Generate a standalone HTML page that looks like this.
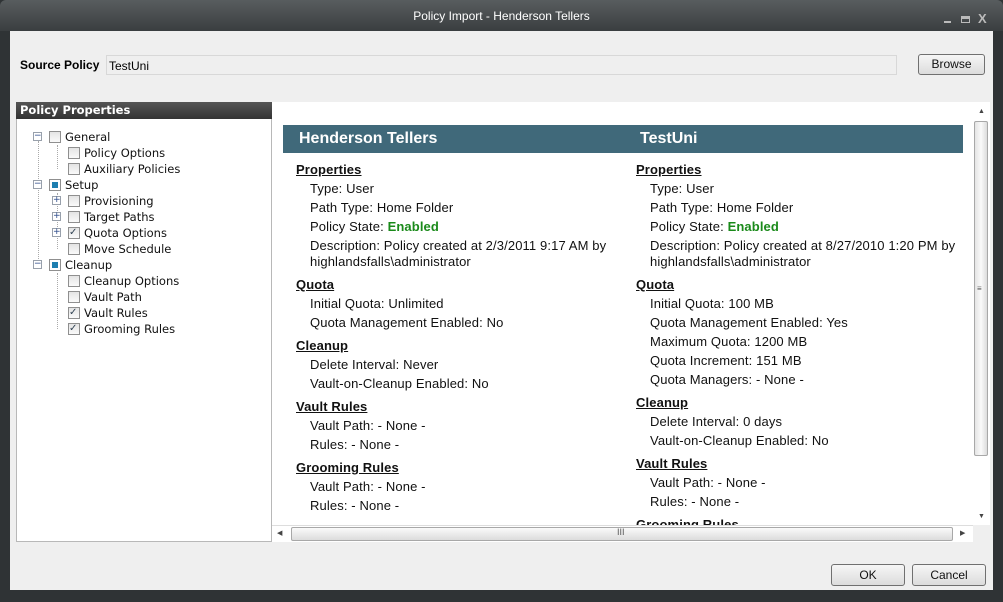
<!DOCTYPE html><html><head><style>
*{margin:0;padding:0;box-sizing:border-box}
body{width:1003px;height:602px;background:#2f3335;font-family:"Liberation Sans",Arial,sans-serif;position:relative;overflow:hidden}
.a{position:absolute}
.t{position:absolute;font-size:13px;line-height:16px;color:#111;white-space:nowrap;transform:translateY(1px);letter-spacing:0.12px}
.h{font-weight:bold;text-decoration:underline}
.g{color:#1a8a1a;font-weight:bold}
.tr{position:absolute;font-size:11.5px;line-height:14px;font-family:"DejaVu Sans",sans-serif;color:#111}
.cb{position:absolute;width:12px;height:12px;border:1px solid #8f8f8f;background:linear-gradient(#e4e4e4,#fafafa)}
.ex{position:absolute;width:9px;height:9px;border:1px solid #98a0ab;background:#fff;font-size:9px;line-height:7px;text-align:center;color:#2b4a8a;font-family:"DejaVu Sans"}
.btn{position:absolute;border:1px solid #707070;border-radius:3px;background:linear-gradient(#f6f6f6,#dcdcdc);font-size:12px;text-align:center;color:#111}
</style></head><body>
<div class="a" style="left:0;top:0;width:1003px;height:31px;background:linear-gradient(#585d5f,#3a3e40);border-radius:6px 6px 0 0"></div>
<div class="a" style="left:0;top:9px;width:1003px;text-align:center;color:#fff;font-size:12px">Policy Import - Henderson Tellers</div>
<div class="a" style="left:944px;top:21px;width:7px;height:2px;background:#bbb"></div>
<div class="a" style="left:961px;top:16px;width:9px;height:7px;border:1px solid #bbb;border-top-width:3px"></div>
<div class="a" style="left:978px;top:11px;color:#bbb;font-size:13px;font-weight:bold">X</div>
<div class="a" style="left:10px;top:31px;width:983px;height:559px;background:#efefef"></div>
<div class="a" style="left:20px;top:58px;font-size:12px;font-weight:bold">Source Policy</div>
<div class="a" style="left:106px;top:55px;width:791px;height:20px;border:1px solid #d8d8d8;background:#efefef;font-size:12px;padding:3px 2px">TestUni</div>
<div class="btn" style="left:918px;top:54px;width:67px;height:21px;line-height:19px">Browse</div>
<!-- left panel -->
<div class="a" style="left:16px;top:102px;width:256px;height:440px;border:1px solid #b8b8b8;background:#fff"></div>
<div class="a" style="left:16px;top:102px;width:256px;height:17px;background:linear-gradient(#555,#333);color:#fff;font-size:11.5px;font-weight:bold;padding:1px 4px;font-family:'DejaVu Sans',sans-serif">Policy Properties</div>
<div class="a" style="left:38px;top:141px;height:128px;border-left:1px dotted #aaa"></div>
<div class="a" style="left:57px;top:145px;height:24px;border-left:1px dotted #aaa"></div>
<div class="a" style="left:57px;top:193px;height:56px;border-left:1px dotted #aaa"></div>
<div class="a" style="left:57px;top:273px;height:56px;border-left:1px dotted #aaa"></div>
<div class="ex" style="left:33px;top:132px">−</div><div class="cb" style="left:49px;top:131px"></div><div class="tr" style="left:65px;top:130px">General</div>
<div class="cb" style="left:68px;top:147px"></div><div class="tr" style="left:84px;top:146px">Policy Options</div>
<div class="cb" style="left:68px;top:163px"></div><div class="tr" style="left:84px;top:162px">Auxiliary Policies</div>
<div class="ex" style="left:33px;top:180px">−</div><div class="cb" style="left:49px;top:179px;background:#fff"><div class="a" style="left:2px;top:2px;width:6px;height:6px;background:#1f7fb0"></div></div><div class="tr" style="left:65px;top:178px">Setup</div>
<div class="ex" style="left:52px;top:196px">+</div><div class="cb" style="left:68px;top:195px"></div><div class="tr" style="left:84px;top:194px">Provisioning</div>
<div class="ex" style="left:52px;top:212px">+</div><div class="cb" style="left:68px;top:211px"></div><div class="tr" style="left:84px;top:210px">Target Paths</div>
<div class="ex" style="left:52px;top:228px">+</div><div class="cb" style="left:68px;top:227px;font-size:10px;line-height:10px;color:#345">✓</div><div class="tr" style="left:84px;top:226px">Quota Options</div>
<div class="cb" style="left:68px;top:243px"></div><div class="tr" style="left:84px;top:242px">Move Schedule</div>
<div class="ex" style="left:33px;top:260px">−</div><div class="cb" style="left:49px;top:259px;background:#fff"><div class="a" style="left:2px;top:2px;width:6px;height:6px;background:#1f7fb0"></div></div><div class="tr" style="left:65px;top:258px">Cleanup</div>
<div class="cb" style="left:68px;top:275px"></div><div class="tr" style="left:84px;top:274px">Cleanup Options</div>
<div class="cb" style="left:68px;top:291px"></div><div class="tr" style="left:84px;top:290px">Vault Path</div>
<div class="cb" style="left:68px;top:307px;font-size:10px;line-height:10px;color:#345">✓</div><div class="tr" style="left:84px;top:306px">Vault Rules</div>
<div class="cb" style="left:68px;top:323px;font-size:10px;line-height:10px;color:#345">✓</div><div class="tr" style="left:84px;top:322px">Grooming Rules</div>
<!-- right content -->
<div class="a" style="left:272px;top:102px;width:701px;height:423px;background:#fff;overflow:hidden">
<div class="a" style="left:11px;top:23px;width:680px;height:28px;background:#40697a"></div>
<div class="a" style="left:27px;top:28px;color:#fff;font-weight:bold;font-size:16px">Henderson Tellers</div>
<div class="a" style="left:368px;top:28px;color:#fff;font-weight:bold;font-size:16px">TestUni</div>
<div class="t h" style="left:24px;top:59px">Properties</div>
<div class="t" style="left:38px;top:78px">Type: User</div>
<div class="t" style="left:38px;top:97px">Path Type: Home Folder</div>
<div class="t" style="left:38px;top:116px">Policy State: <span class="g">Enabled</span></div>
<div class="t" style="left:38px;top:135px">Description: Policy created at 2/3/2011 9:17 AM by</div>
<div class="t" style="left:38px;top:151px">highlandsfalls\administrator</div>
<div class="t h" style="left:24px;top:174px">Quota</div>
<div class="t" style="left:38px;top:193px">Initial Quota: Unlimited</div>
<div class="t" style="left:38px;top:212px">Quota Management Enabled: No</div>
<div class="t h" style="left:24px;top:235px">Cleanup</div>
<div class="t" style="left:38px;top:254px">Delete Interval: Never</div>
<div class="t" style="left:38px;top:273px">Vault-on-Cleanup Enabled: No</div>
<div class="t h" style="left:24px;top:296px">Vault Rules</div>
<div class="t" style="left:38px;top:315px">Vault Path: - None -</div>
<div class="t" style="left:38px;top:334px">Rules: - None -</div>
<div class="t h" style="left:24px;top:357px">Grooming Rules</div>
<div class="t" style="left:38px;top:376px">Vault Path: - None -</div>
<div class="t" style="left:38px;top:395px">Rules: - None -</div>

<div class="t h" style="left:364px;top:59px">Properties</div>
<div class="t" style="left:378px;top:78px">Type: User</div>
<div class="t" style="left:378px;top:97px">Path Type: Home Folder</div>
<div class="t" style="left:378px;top:116px">Policy State: <span class="g">Enabled</span></div>
<div class="t" style="left:378px;top:135px">Description: Policy created at 8/27/2010 1:20 PM by</div>
<div class="t" style="left:378px;top:151px">highlandsfalls\administrator</div>
<div class="t h" style="left:364px;top:174px">Quota</div>
<div class="t" style="left:378px;top:193px">Initial Quota: 100 MB</div>
<div class="t" style="left:378px;top:212px">Quota Management Enabled: Yes</div>
<div class="t" style="left:378px;top:231px">Maximum Quota: 1200 MB</div>
<div class="t" style="left:378px;top:250px">Quota Increment: 151 MB</div>
<div class="t" style="left:378px;top:269px">Quota Managers: - None -</div>
<div class="t h" style="left:364px;top:292px">Cleanup</div>
<div class="t" style="left:378px;top:311px">Delete Interval: 0 days</div>
<div class="t" style="left:378px;top:330px">Vault-on-Cleanup Enabled: No</div>
<div class="t h" style="left:364px;top:353px">Vault Rules</div>
<div class="t" style="left:378px;top:372px">Vault Path: - None -</div>
<div class="t" style="left:378px;top:391px">Rules: - None -</div>
<div class="t h" style="left:364px;top:414px">Grooming Rules</div>
</div>
<!-- scrollbars -->
<div class="a" style="left:973px;top:102px;width:17px;height:423px;background:#fff"></div>
<div class="a" style="left:978px;top:108px;font-size:7px;color:#444">▲</div>
<div class="a" style="left:974px;top:121px;width:14px;height:335px;border:1px solid #a8a8a8;border-radius:2px;background:linear-gradient(90deg,#e4e4e4,#fafafa,#dcdcdc)"></div>
<div class="a" style="left:977px;top:284px;font-size:8px;color:#555">≡</div>
<div class="a" style="left:978px;top:513px;font-size:7px;color:#444">▼</div>
<div class="a" style="left:272px;top:525px;width:701px;height:17px;background:#fff;border-top:1px solid #ddd"></div>
<div class="a" style="left:277px;top:529px;font-size:7px;color:#444">◀</div>
<div class="a" style="left:291px;top:527px;width:662px;height:14px;border:1px solid #a8a8a8;border-radius:2px;background:linear-gradient(#fafafa,#dcdcdc)"></div>
<div class="a" style="left:617px;top:527px;font-size:9px;color:#555">III</div>
<div class="a" style="left:960px;top:529px;font-size:7px;color:#444">▶</div>
<div class="btn" style="left:831px;top:564px;width:74px;height:22px;line-height:20px">OK</div>
<div class="btn" style="left:912px;top:564px;width:74px;height:22px;line-height:20px">Cancel</div>
</body></html>
